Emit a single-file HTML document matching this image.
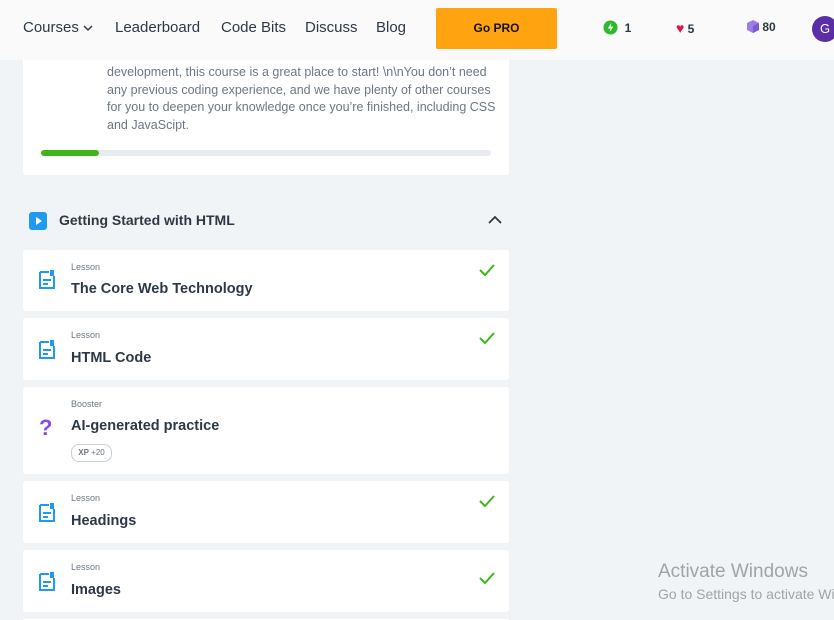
<!DOCTYPE html>
<html style="overflow:hidden"><head><meta charset="utf-8"><style>
html,body{margin:0;width:834px;height:620px;overflow:hidden}
body{background:#f1f4f6;font-family:"Liberation Sans",sans-serif;position:relative}
.hdr{position:absolute;left:0;top:0;width:834px;height:60px;background:#fafafa;z-index:2;overflow:hidden}
.nav{position:absolute;top:19px;font-size:15px;color:#2d3846}
.pro{position:absolute;left:436px;top:8px;width:121px;height:41px;background:#ffa310;border-radius:2px;font-weight:bold;font-size:12px;text-align:center;line-height:41px;color:#111}
.st{position:absolute;top:20px;font-size:12px;font-weight:bold;color:#2d3846}
.card{position:absolute;left:23px;width:486px;background:#fff;border-radius:3px}
.lbl{position:absolute;left:48px;font-size:9px;color:#6b7785}
.ttl{position:absolute;left:48px;font-size:14.5px;font-weight:bold;color:#2d3846}
.ic{position:absolute;left:16px}
.ck{position:absolute;right:14px;top:14px}
</style></head><body>
<div class="hdr">
<div class="nav" style="left:23px">Courses <svg width="10" height="8" viewBox="0 0 10 8"><path d="M1 2l4 4 4-4" stroke="#2d3846" stroke-width="1.5" fill="none"/></svg></div>
<div class="nav" style="left:115px">Leaderboard</div>
<div class="nav" style="left:221px">Code Bits</div>
<div class="nav" style="left:305px">Discuss</div>
<div class="nav" style="left:376px">Blog</div>
<div class="pro">Go PRO</div>
<div class="st" style="left:603px"><svg width="15" height="15" viewBox="0 0 16 16" style="vertical-align:-3px"><circle cx="8" cy="8" r="7.5" fill="#2eb82e"/><path d="M9 3L5 9h3l-1 4 4-6H8z" fill="#fff"/></svg> &nbsp;1</div>
<div class="st" style="left:676px"><span style="color:#e5134c;font-size:14px">♥</span> 5</div>
<div class="st" style="left:747px"><svg width="12" height="13" viewBox="0 0 12 13" style="vertical-align:-2px"><path d="M6 0l6 3v7l-6 3-6-3V3z" fill="#9b7de8"/><path d="M6 6l6-3v7l-6 3z" fill="#7a5bd0"/></svg> 80</div>
<div style="position:absolute;left:812px;top:16px;width:26px;height:26px;border-radius:50%;background:#5a2ea6;color:#fff;font-size:13px;line-height:26px;text-indent:8px">G</div>
</div>
<div class="card" style="top:20px;height:155px">
<div style="position:absolute;left:84px;top:44px;width:390px;font-size:12.5px;line-height:17.5px;color:#6b7785">development, this course is a great place to start! \n\nYou don’t need any previous coding experience, and we have plenty of other courses for you to deepen your knowledge once you’re finished, including CSS and JavaScipt.</div>
<div style="position:absolute;left:18px;top:130px;width:450px;height:6px;border-radius:3px;background:#e8ecf0"><div style="width:58px;height:6px;border-radius:3px;background:#3fb618"></div></div>
</div>
<svg style="position:absolute;left:29px;top:212px" width="18" height="18"><rect width="18" height="18" rx="3" fill="#1e9bf0"/><path d="M7 5l6 4-6 4z" fill="#fff"/></svg>
<div style="position:absolute;left:59px;top:212px;font-size:14px;font-weight:bold;color:#2d3846">Getting Started with HTML</div>
<svg style="position:absolute;left:488px;top:215px" width="14" height="10"><path d="M1 8l6-6 6 6" stroke="#2d3846" stroke-width="1.8" fill="none"/></svg>

<div class="card" style="top:250px;height:61px"><svg class="ic" style="top:20px" width="16" height="20" viewBox="0 0 16 20"><path d="M1 2h9M1 2v16h14V6" stroke="#1e9bf0" stroke-width="2" fill="none"/><rect x="11" y="0" width="4" height="6" fill="#1e9bf0"/><path d="M4 10h8M4 14h5" stroke="#1e9bf0" stroke-width="2"/></svg><div class="lbl" style="top:12px">Lesson</div><div class="ttl" style="top:31px">The Core Web Technology</div><svg class="ck" width="16" height="12"><path d="M1 6l5 5 9-10" stroke="#3fb618" stroke-width="2" fill="none"/></svg></div>
<div class="card" style="top:318px;height:62px"><svg class="ic" style="top:22px" width="16" height="20" viewBox="0 0 16 20"><path d="M1 2h9M1 2v16h14V6" stroke="#1e9bf0" stroke-width="2" fill="none"/><rect x="11" y="0" width="4" height="6" fill="#1e9bf0"/><path d="M4 10h8M4 14h5" stroke="#1e9bf0" stroke-width="2"/></svg><div class="lbl" style="top:12px">Lesson</div><div class="ttl" style="top:32px">HTML Code</div><svg class="ck" width="16" height="12"><path d="M1 6l5 5 9-10" stroke="#3fb618" stroke-width="2" fill="none"/></svg></div>
<div class="card" style="top:387px;height:87px"><div style="position:absolute;left:16px;top:28px;font-size:22px;font-weight:bold;color:#8a4fe0">?</div><div class="lbl" style="top:12px">Booster</div><div class="ttl" style="top:31px">AI-generated practice</div><div style="position:absolute;left:48px;top:57px;width:39px;height:16px;border:1px solid #c8cfd6;border-radius:8px;font-size:8px;color:#6b7785;line-height:16px;text-align:center"><b>XP</b> +20</div></div>
<div class="card" style="top:481px;height:62px"><svg class="ic" style="top:22px" width="16" height="20" viewBox="0 0 16 20"><path d="M1 2h9M1 2v16h14V6" stroke="#1e9bf0" stroke-width="2" fill="none"/><rect x="11" y="0" width="4" height="6" fill="#1e9bf0"/><path d="M4 10h8M4 14h5" stroke="#1e9bf0" stroke-width="2"/></svg><div class="lbl" style="top:12px">Lesson</div><div class="ttl" style="top:32px">Headings</div><svg class="ck" width="16" height="12"><path d="M1 6l5 5 9-10" stroke="#3fb618" stroke-width="2" fill="none"/></svg></div>
<div class="card" style="top:550px;height:62px"><svg class="ic" style="top:22px" width="16" height="20" viewBox="0 0 16 20"><path d="M1 2h9M1 2v16h14V6" stroke="#1e9bf0" stroke-width="2" fill="none"/><rect x="11" y="0" width="4" height="6" fill="#1e9bf0"/><path d="M4 10h8M4 14h5" stroke="#1e9bf0" stroke-width="2"/></svg><div class="lbl" style="top:12px">Lesson</div><div class="ttl" style="top:32px">Images</div><svg class="ck" style="top:22px" width="16" height="12"><path d="M1 6l5 5 9-10" stroke="#3fb618" stroke-width="2" fill="none"/></svg></div>
<div class="card" style="top:619px;height:1px"></div>
<div style="position:absolute;left:658px;top:561px;width:176px;overflow:hidden;font-size:19px;color:#a0a4a8;white-space:nowrap">Activate Windows</div>
<div style="position:absolute;left:658px;top:586px;width:176px;overflow:hidden;font-size:14px;color:#a0a4a8;white-space:nowrap">Go to Settings to activate Windows.</div>
</body></html>
